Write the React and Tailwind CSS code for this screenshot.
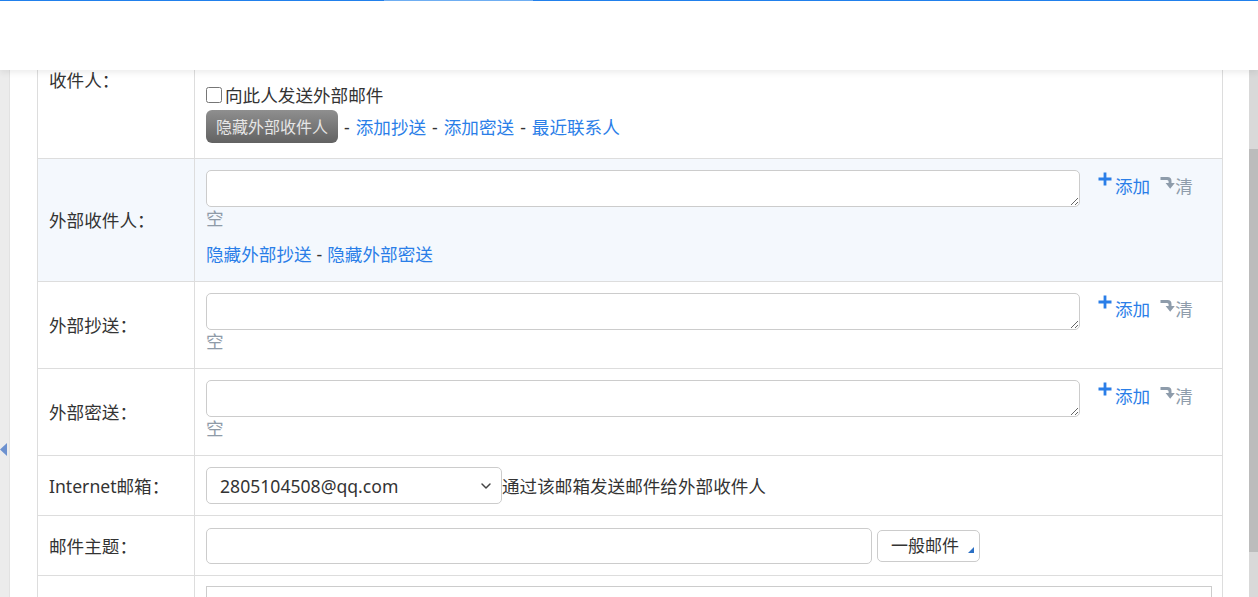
import { ChevronDown } from "lucide-react";

const font = { fontFamily: '"Segoe UI", "Noto Sans", "Noto Sans CJK SC", sans-serif' };

const PlusIcon = () => (
  <svg width="14" height="14" viewBox="0 0 14 14" className="mt-[-2px]">
    <path d="M7 0.5 V13.5 M0.5 7 H13.5" stroke="#2a7ee8" strokeWidth="2.8" />
  </svg>
);

const ClearIcon = () => (
  <svg width="15" height="15" viewBox="0 0 15 15" className="mt-[1px]">
    <path d="M0.5 2 H7.5 Q11.5 2 11.5 6 V8 H14.8 L10.2 13.8 L5.6 8 H8.6 V6.6 Q8.6 5 7 5 H0.5 Z" fill="#8e9cab" />
  </svg>
);

const Actions = () => (
  <div className="ml-[18px] flex items-start pt-[4px] text-[17.6px] leading-[24px]">
    <PlusIcon />
    <span className="ml-[3px] text-[#2a7ee8]">添加</span>
    <span className="ml-[10px] flex items-start text-[#8e9cab]">
      <ClearIcon />
      <span>清</span>
    </span>
  </div>
);

const Label = ({ children, top }) => (
  <div className={`flex w-[157px] shrink-0 border-r border-[#dddddd] pl-[11px] text-[#333333] ${top ? "items-start" : "items-center"}`}>
    {children}
  </div>
);

const AddrRow = ({ label, extra, bg }) => (
  <div className={`flex border-b border-[#dddddd] ${bg || ""}`}>
    <Label>{label}</Label>
    <div className="flex-1 pl-[11px] pt-[11px] pb-[2px]">
      <div className="flex items-start">
        <textarea className="h-[37px] w-[874px] rounded-[5px] border border-[#cccccc] bg-white outline-none" />
        <Actions />
      </div>
      <div className="text-[#8f9ba8] leading-[22px]">空</div>
      {extra}
    </div>
  </div>
);

export default function App() {
  return (
    <div className="relative h-[597px] w-[1258px] overflow-hidden bg-white text-[17.6px] leading-[24px]" style={font}>
      <div className="relative z-10 h-[70px] bg-white shadow-[0_3px_6px_rgba(0,0,0,0.07)]">
        <div className="flex h-[1px]">
          <div className="w-[384px] bg-[#2180ec]" />
          <div className="w-[149px] bg-[#6faef2]" />
          <div className="flex-1 bg-[#2180ec]" />
        </div>
      </div>

      <div className="flex h-[527px]">
        <div className="flex w-[10px] shrink-0 flex-col border-r border-[#e2e2e2] bg-[#ececec] pt-[373px]">
          <svg width="7" height="13" viewBox="0 0 7 13">
            <path d="M7 0 V13 L0 6.5 Z" fill="#6d91cf" />
          </svg>
        </div>
        <div className="w-[27px] shrink-0" />

        <div className="w-[1186px] shrink-0 border-x border-[#dddddd]">
          {/* 收件人 */}
          <div className="flex h-[89px] border-b border-[#dddddd]">
            <Label top>
              <span className="leading-[20px]">收件人：</span>
            </Label>
            <div className="flex-1 pl-[11px] pt-[13px]">
              <label className="flex items-center text-[#333333]">
                <input type="checkbox" className="m-0 mr-[3px] h-[16px] w-[16px]" />
                向此人发送外部邮件
              </label>
              <div className="mt-[3px] flex items-center text-[#333333]">
                <button className="h-[33px] rounded-[6px] bg-gradient-to-b from-[#8f8f8f] to-[#626262] px-[10px] text-[16px] text-[#e6e6e6]">
                  隐藏外部收件人
                </button>
                <span className="mx-[6px]">-</span>
                <a className="text-[#2a7ee8]">添加抄送</a>
                <span className="mx-[6px]">-</span>
                <a className="text-[#2a7ee8]">添加密送</a>
                <span className="mx-[6px]">-</span>
                <a className="text-[#2a7ee8]">最近联系人</a>
              </div>
            </div>
          </div>

          <AddrRow
            label="外部收件人："
            bg="bg-[#f4f8fd]"
            extra={
              <div className="mt-[13px] mb-[13px] text-[#333333]">
                <a className="text-[#2a7ee8]">隐藏外部抄送</a>
                <span className="mx-[5px]">-</span>
                <a className="text-[#2a7ee8]">隐藏外部密送</a>
              </div>
            }
          />
          <AddrRow label="外部抄送：" extra={<div className="h-[14px]" />} />
          <AddrRow label="外部密送：" extra={<div className="h-[14px]" />} />

          {/* Internet邮箱 */}
          <div className="flex h-[60px] border-b border-[#dddddd]">
            <Label>Internet邮箱：</Label>
            <div className="flex flex-1 items-center pl-[11px] text-[#333333]">
              <div className="relative">
                <select className="h-[37px] w-[296px] appearance-none rounded-[5px] border border-[#cccccc] bg-white pl-[13px] text-[#333333] outline-none">
                  <option>2805104508@qq.com</option>
                </select>
                <ChevronDown size={16} strokeWidth={2.2} className="pointer-events-none absolute right-[8px] top-[11px] text-[#444444]" />
              </div>
              <span>通过该邮箱发送邮件给外部收件人</span>
            </div>
          </div>

          {/* 邮件主题 */}
          <div className="flex h-[60px] border-b border-[#dddddd]">
            <Label>邮件主题：</Label>
            <div className="flex flex-1 items-center pl-[11px]">
              <input className="h-[36px] w-[666px] rounded-[5px] border border-[#cccccc] outline-none" />
              <button className="relative ml-[5px] h-[32px] w-[103px] rounded-[5px] border border-[#cccccc] bg-white pl-[13px] text-left text-[17px] text-[#333333]">
                一般邮件
                <svg width="6" height="6" viewBox="0 0 6 6" className="absolute bottom-[8px] right-[5px]">
                  <path d="M6 0 V6 H0 Z" fill="#2a6fc4" />
                </svg>
              </button>
            </div>
          </div>

          {/* 正文 */}
          <div className="flex h-[60px]">
            <Label />
            <div className="flex-1 pl-[11px] pr-[10px] pt-[10px]">
              <div className="h-full border border-b-0 border-[#cccccc]" />
            </div>
          </div>
        </div>

        <div className="flex-1" />
        <div className="flex w-[9px] shrink-0 flex-col bg-[#d9d9d9]">
          <div className="h-[79px]" />
          <div className="h-[403px] bg-[#bcbcbc]" />
        </div>
      </div>
    </div>
  );
}
